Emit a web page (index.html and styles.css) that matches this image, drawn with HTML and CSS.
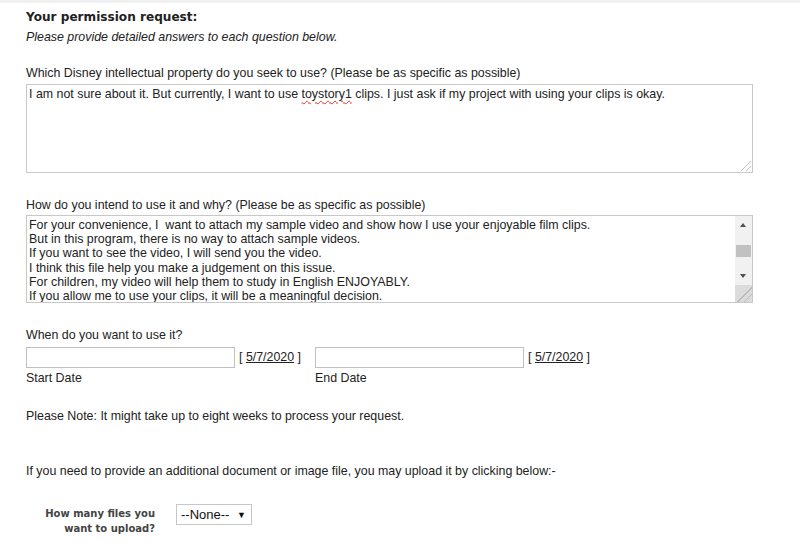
FILE: index.html
```html
<!DOCTYPE html>
<html>
<head>
<meta charset="utf-8">
<link rel="stylesheet" href="styles.css">
</head>
<body>
<div class="topbar"></div>
<div class="page">
  <h2 class="title">Your permission request:</h2>
  <p class="intro">Please provide detailed answers to each question below.</p>

  <div class="q q1">
    <div class="label">Which Disney intellectual property do you seek to use? (Please be as specific as possible)</div>
    <div class="ta ta1">
      <div class="ta-text">I am not sure about it. But currently, I want to use <span class="spell">toystory1</span> clips. I just ask if my project with using your clips is okay.</div>
      <div class="grip"></div>
    </div>
  </div>

  <div class="q q2">
    <div class="label">How do you intend to use it and why? (Please be as specific as possible)</div>
    <div class="ta ta2">
      <div class="ta-text lines">For your convenience, I &nbsp;want to attach my sample video and show how I use your enjoyable film clips.<br>But in this program, there is no way to attach sample videos.<br>If you want to see the video, I will send you the video.<br>I think this file help you make a judgement on this issue.<br>For children, my video will help them to study in English ENJOYABLY.<br>If you allow me to use your clips, it will be a meaningful decision.</div>
      <div class="sbar">
        <div class="arrow up"></div>
        <div class="track"><div class="thumb"></div></div>
        <div class="arrow down"></div>
        <div class="corner"></div>
      </div>
    </div>
  </div>

  <div class="q q3">
    <div class="label">When do you want to use it?</div>
    <div class="dates">
      <div class="date">
        <div class="date-row"><div class="input"></div><span class="today">[ <u>5/7/2020</u> ]</span></div>
        <div class="sub">Start Date</div>
      </div>
      <div class="date">
        <div class="date-row"><div class="input"></div><span class="today">[ <u>5/7/2020</u> ]</span></div>
        <div class="sub">End Date</div>
      </div>
    </div>
  </div>

  <p class="note">Please Note: It might take up to eight weeks to process your request.</p>

  <p class="upload">If you need to provide an additional document or image file, you may upload it by clicking below:-</p>

  <div class="files">
    <div class="files-label">How many files you<br>want to upload?</div>
    <div class="select">--None-- <span class="caret">&#9660;</span></div>
  </div>
</div>
</body>
</html>
```
FILE: styles.css
```css
html, body {
  margin: 0;
  padding: 0;
  background: #fff;
}
body {
  font-family: "Liberation Sans", Arial, sans-serif;
  font-size: 12.4px;
  color: #333;
  width: 800px;
  height: 552px;
  overflow: hidden;
}
.topbar {
  height: 3px;
  background: #f1f1f1;
}
.page {
  padding-left: 26px;
  width: 727px;
}
.title {
  margin: 0;
  padding-top: 6px;
  font-family: "DejaVu Sans", Verdana, sans-serif;
  font-weight: bold;
  font-size: 12.1px;
  line-height: 16px;
  color: #222;
}
.intro {
  margin: 5px 0 0;
  font-style: italic;
  font-size: 12.4px;
  line-height: 15px;
  color: #222;
}
.label {
  line-height: 15px;
  color: #222;
}
.q1 { margin-top: 21px; }
.q1 .label { margin-bottom: 3px; }
.ta {
  border: 1px solid #c8c8c8;
  box-sizing: border-box;
  display: flex;
  position: relative;
  background: #fff;
}
.ta1 { height: 89px; }
.ta-text {
  flex: 1;
  padding: 2px 2px;
  line-height: 15px;
  color: #222;
}
.spell {
  text-decoration: underline wavy #e03030;
  text-decoration-thickness: 1px;
  text-underline-offset: 2px;
}
.grip {
  position: absolute;
  right: 1px;
  bottom: 1px;
  width: 10px;
  height: 10px;
  background: linear-gradient(135deg, transparent 45%, #c4c4c4 45%, #c4c4c4 52%, transparent 52%, transparent 70%, #c4c4c4 70%, #c4c4c4 77%, transparent 77%);
}
.q2 { margin-top: 25px; }
.q2 .label { margin-bottom: 2px; }
.ta2 { height: 88px; overflow: hidden; }
.lines {
  line-height: 14.2px;
  padding-top: 2px;
  white-space: nowrap;
  overflow: hidden;
}
.sbar {
  width: 17px;
  display: flex;
  flex-direction: column;
  background: #f1f1f1;
}
.arrow {
  height: 17px;
  position: relative;
}
.arrow::after {
  content: "";
  position: absolute;
  left: 5px;
  width: 0;
  height: 0;
  border-left: 3.5px solid transparent;
  border-right: 3.5px solid transparent;
}
.arrow.up::after {
  top: 7px;
  border-bottom: 4px solid #505050;
}
.arrow.down::after {
  top: 6px;
  border-top: 4px solid #505050;
}
.track {
  flex: 1;
  position: relative;
}
.thumb {
  margin: 12px 1px 0;
  height: 12px;
  background: #c1c1c1;
}
.corner {
  height: 17px;
  background: #dcdcdc linear-gradient(135deg, transparent 55%, #bbb 55%, #bbb 60%, transparent 60%, transparent 74%, #bbb 74%, #bbb 79%, transparent 79%);
}
.q3 { margin-top: 25px; }
.q3 .label { margin-bottom: 4px; }
.dates {
  display: flex;
}
.date {
  width: 289px;
}
.date-row {
  display: flex;
  align-items: center;
  gap: 4px;
}
.input {
  width: 209px;
  height: 21px;
  box-sizing: border-box;
  border: 1px solid #c0c0c0;
  background: #fff;
}
.today {
  color: #222;
  line-height: 15px;
}
.today u {
  text-underline-offset: 1px;
}
.sub {
  margin-top: 3px;
  line-height: 15px;
  color: #222;
}
.note {
  margin: 23px 0 0;
  line-height: 15px;
  color: #222;
}
.upload {
  margin: 40px 0 0;
  line-height: 15px;
  color: #222;
}
.files {
  margin-top: 25px;
  display: flex;
  align-items: flex-start;
  gap: 21px;
}
.files-label {
  width: 129px;
  text-align: right;
  font-family: "DejaVu Sans", Verdana, sans-serif;
  font-weight: bold;
  font-size: 10px;
  line-height: 15px;
  color: #444;
  margin-top: 2px;
}
.select {
  box-sizing: border-box;
  height: 21px;
  width: 76px;
  border: 1px solid #c6c6c6;
  padding: 0 0 0 4px;
  line-height: 19px;
  font-size: 13px;
  color: #111;
  background: #fff;
}
.caret {
  font-size: 9px;
  margin-left: 4px;
  vertical-align: 1px;
}
```
